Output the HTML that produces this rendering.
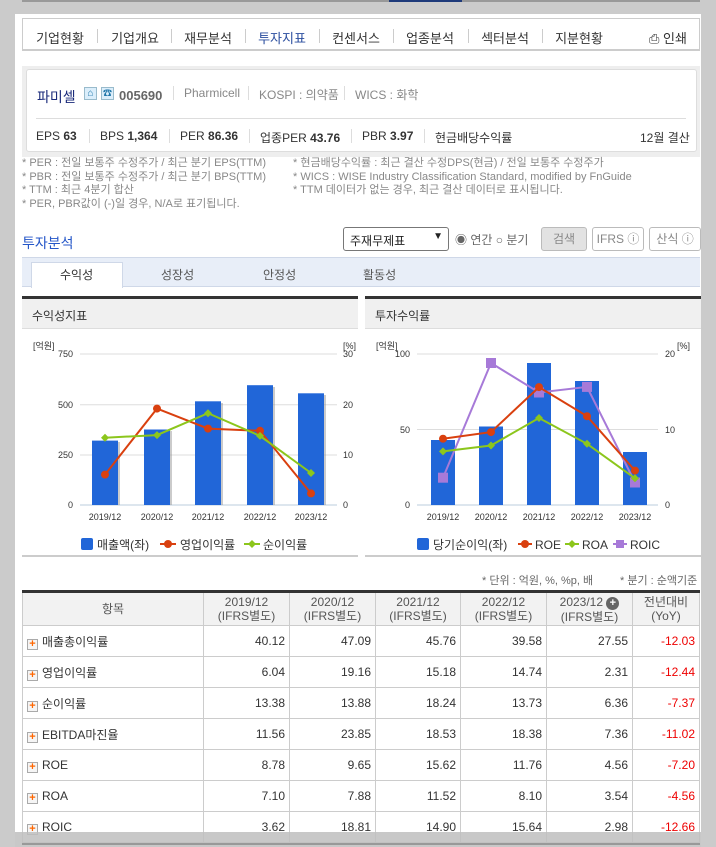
<!DOCTYPE html>
<html><head><meta charset="utf-8"><style>
*{margin:0;padding:0;box-sizing:border-box}
body{width:716px;height:847px;background:#cbcbcb;position:relative;overflow:hidden;font-family:"Liberation Sans","Noto Sans CJK KR",sans-serif;font-size:12px;color:#333}
.a{position:absolute;white-space:nowrap}
.white{position:absolute;left:15px;top:14px;width:686px;height:833px;background:#fff}
.nav{position:absolute;left:22px;top:18px;width:678px;height:33px;border:1px solid #ccc;border-bottom:2px solid #ccc;background:#fff}
.nav span{position:absolute;top:9px;font-size:13px;color:#333;width:74px;text-align:center}
.sep{position:absolute;top:10px;width:1px;height:14px;background:#ccc}
.note{font-size:11px;color:#888}
table{border-collapse:collapse;position:absolute;left:22px;top:590px;width:678px;border-top:3px solid #333}
td,th{border:1px solid #ccc;height:31px;font-size:12px;font-weight:normal}
th{background:#f2f2f2;color:#555;height:34px;line-height:14px}
td.n{text-align:right;padding-right:4px;color:#333}
td.r{color:#e00}
td.l{text-align:left;padding-left:4px}
.pl{display:inline-block;width:11px;height:11px;border:1px solid #aaa;background:#f5f5f5;color:#f60;font-size:11px;line-height:9px;text-align:center;font-weight:bold;margin-right:4px;vertical-align:-1px}
.btn{position:absolute;top:227px;height:24px;border:1px solid #bbb;border-radius:3px;font-size:12px;color:#888;text-align:center;line-height:22px}
</style></head><body>
<div class="a" style="left:22px;top:0;width:678px;height:2px;background:#999"></div>
<div class="a" style="left:389px;top:0;width:73px;height:2px;background:#1e3a7a"></div>
<div class="white"></div>
<div class="nav">
<span style="left:0">기업현황</span><div class="sep" style="left:74px"></div>
<span style="left:75px">기업개요</span><div class="sep" style="left:148px"></div>
<span style="left:148px">재무분석</span><div class="sep" style="left:222px"></div>
<span style="left:222px;color:#2a4d9e">투자지표</span><div class="sep" style="left:296px"></div>
<span style="left:296px">컨센서스</span><div class="sep" style="left:370px"></div>
<span style="left:370px">업종분석</span><div class="sep" style="left:445px"></div>
<span style="left:445px">섹터분석</span><div class="sep" style="left:519px"></div>
<span style="left:519px">지분현황</span>
<span style="left:620px;width:50px">⎙ 인쇄</span>
</div>
<div class="a" style="left:22px;top:66px;width:678px;height:91px;background:#eee"></div>
<div class="a" style="left:26px;top:69px;width:671px;height:83px;background:#fff;border:1px solid #ddd;border-radius:3px"></div>
<div class="a" style="left:37px;top:87px;font-size:14px;color:#1a2a7a">파미셀</div>
<div class="a" style="left:84px;top:87px;width:13px;height:13px;border:1px solid #9bc;background:#dbeefb;color:#27a;font-size:10px;line-height:11px;text-align:center">⌂</div>
<div class="a" style="left:101px;top:87px;width:13px;height:13px;border:1px solid #9bc;background:#dbeefb;color:#27a;font-size:9px;line-height:11px;text-align:center">☎</div>
<div class="a" style="left:119px;top:88px;font-size:13px;font-weight:bold;color:#666">005690</div>
<div class="a" style="left:173px;top:86px;width:1px;height:14px;background:#ddd"></div>
<div class="a note" style="left:184px;top:86px;font-size:12px">Pharmicell</div>
<div class="a" style="left:248px;top:86px;width:1px;height:14px;background:#ddd"></div>
<div class="a note" style="left:259px;top:86px;font-size:12px">KOSPI : 의약품</div>
<div class="a" style="left:344px;top:86px;width:1px;height:14px;background:#ddd"></div>
<div class="a note" style="left:355px;top:86px;font-size:12px">WICS : 화학</div>
<div class="a" style="left:36px;top:118px;width:650px;height:1px;background:#ddd"></div>
<div class="a" style="left:36px;top:129px;font-size:12px">EPS <b>63</b></div>
<div class="a" style="left:89px;top:129px;width:1px;height:14px;background:#ddd"></div>
<div class="a" style="left:100px;top:129px">BPS <b>1,364</b></div>
<div class="a" style="left:169px;top:129px;width:1px;height:14px;background:#ddd"></div>
<div class="a" style="left:180px;top:129px">PER <b>86.36</b></div>
<div class="a" style="left:249px;top:129px;width:1px;height:14px;background:#ddd"></div>
<div class="a" style="left:260px;top:129px">업종PER <b>43.76</b></div>
<div class="a" style="left:351px;top:129px;width:1px;height:14px;background:#ddd"></div>
<div class="a" style="left:362px;top:129px">PBR <b>3.97</b></div>
<div class="a" style="left:424px;top:129px;width:1px;height:14px;background:#ddd"></div>
<div class="a" style="left:435px;top:129px">현금배당수익률</div>
<div class="a" style="left:640px;top:129px">12월 결산</div>
<div class="a note" style="left:22px;top:157px;line-height:13.5px">* PER : 전일 보통주 수정주가 / 최근 분기 EPS(TTM)<br>* PBR : 전일 보통주 수정주가 / 최근 분기 BPS(TTM)<br>* TTM : 최근 4분기 합산<br>* PER, PBR값이 (-)일 경우, N/A로 표기됩니다.</div>
<div class="a note" style="left:293px;top:157px;line-height:13.5px">* 현금배당수익률 : 최근 결산 수정DPS(현금) / 전일 보통주 수정주가<br>* WICS : WISE Industry Classification Standard, modified by FnGuide<br>* TTM 데이터가 없는 경우, 최근 결산 데이터로 표시됩니다.</div>
<div class="a" style="left:22px;top:233px;font-size:14px;color:#2456c8">투자분석</div>
<div class="a" style="left:343px;top:227px;width:106px;height:24px;border:1px solid #777;border-radius:3px;background:#fff;font-size:12px;padding:4px 6px;color:#222">주재무제표<span style="position:absolute;right:5px;top:3px;font-size:10px">▼</span></div>
<div class="a" style="left:455px;top:231px;font-size:12px;color:#666">◉ 연간 ○ 분기</div>
<div class="btn" style="left:541px;width:46px;background:#e2e2e2">검색</div>
<div class="btn" style="left:592px;width:52px">IFRS ⓘ</div>
<div class="btn" style="left:649px;width:52px">산식 ⓘ</div>
<div class="a" style="left:22px;top:257px;width:678px;height:30px;background:#e8eef8;border-top:1px solid #cfd8e8;border-bottom:1px solid #cfd8e8"></div>
<div class="a" style="left:31px;top:262px;width:92px;height:26px;background:#fff;border:1px solid #cfd8e8;border-bottom:none"></div>
<div class="a" style="left:60px;top:266px;color:#333">수익성</div>
<div class="a" style="left:161px;top:266px;color:#555">성장성</div>
<div class="a" style="left:263px;top:266px;color:#555">안정성</div>
<div class="a" style="left:363px;top:266px;color:#555">활동성</div>
<div class="a" style="left:22px;top:296px;width:336px;height:33px;background:#f0f0f0;border-top:3px solid #333;border-bottom:1px solid #ddd"></div>
<div class="a" style="left:365px;top:296px;width:336px;height:33px;background:#f0f0f0;border-top:3px solid #333;border-bottom:1px solid #ddd"></div>
<div class="a" style="left:32px;top:307px">수익성지표</div>
<div class="a" style="left:375px;top:307px">투자수익률</div>
<svg class="a" style="left:0;top:0" width="716" height="570" font-family="Liberation Sans,Noto Sans CJK KR,sans-serif">
<g font-size="9" fill="#333">
<text x="33" y="349">[억원]</text><text x="343" y="349">[%]</text>
<text x="73" y="357" text-anchor="end">750</text><text x="73" y="408" text-anchor="end">500</text><text x="73" y="458" text-anchor="end">250</text><text x="73" y="508" text-anchor="end">0</text>
<text x="343" y="357">30</text><text x="343" y="408">20</text><text x="343" y="458">10</text><text x="343" y="508">0</text>
</g>
<g stroke="#ddd"><line x1="80" y1="354" x2="337" y2="354"/><line x1="80" y1="404.7" x2="337" y2="404.7"/><line x1="80" y1="455" x2="337" y2="455"/></g>
<line x1="80" y1="505" x2="337" y2="505" stroke="#bcd"/>
<g fill="#999" opacity=".5"><rect x="94" y="442" width="26" height="63"/><rect x="146" y="431" width="26" height="74"/><rect x="197" y="403" width="26" height="102"/><rect x="249" y="387" width="26" height="118"/><rect x="300" y="395" width="26" height="110"/></g>
<g fill="#2166d8"><rect x="92" y="440.6" width="26" height="64.4"/><rect x="144" y="429.5" width="26" height="75.5"/><rect x="195" y="401.3" width="26" height="103.7"/><rect x="247" y="385.2" width="26" height="119.8"/><rect x="298" y="393.3" width="26" height="111.7"/></g>
<polyline points="105,474.6 157,408.6 208,428.6 260,430.8 311,493.4" fill="none" stroke="#d9400f" stroke-width="2"/>
<g fill="#d9400f"><circle cx="105" cy="474.6" r="4"/><circle cx="157" cy="408.6" r="4"/><circle cx="208" cy="428.6" r="4"/><circle cx="260" cy="430.8" r="4"/><circle cx="311" cy="493.4" r="4"/></g>
<polyline points="105,437.7 157,435.1 208,413.2 260,435.9 311,473" fill="none" stroke="#8cc61c" stroke-width="2"/>
<g fill="#8cc61c"><path d="M105 433.7l4 4-4 4-4-4z"/><path d="M157 431.1l4 4-4 4-4-4z"/><path d="M208 409.2l4 4-4 4-4-4z"/><path d="M260 431.9l4 4-4 4-4-4z"/><path d="M311 469l4 4-4 4-4-4z"/></g>
<g font-size="9" fill="#333" text-anchor="middle"><text x="105" y="520">2019/12</text><text x="157" y="520">2020/12</text><text x="208" y="520">2021/12</text><text x="260" y="520">2022/12</text><text x="311" y="520">2023/12</text></g>
<rect x="81" y="538" width="12" height="12" rx="2" fill="#2166d8"/>
<text x="97" y="549" font-size="12" fill="#333">매출액(좌)</text>
<line x1="160" y1="544" x2="176" y2="544" stroke="#d9400f" stroke-width="2"/><circle cx="168" cy="544" r="4" fill="#d9400f"/>
<text x="180" y="549" font-size="12" fill="#333">영업이익률</text>
<line x1="244" y1="544" x2="260" y2="544" stroke="#8cc61c" stroke-width="2"/><path d="M252 540l4 4-4 4-4-4z" fill="#8cc61c"/>
<text x="263" y="549" font-size="12" fill="#333">순이익률</text>
<rect x="22" y="555" width="336" height="2" fill="#ccc"/>

<g font-size="9" fill="#333">
<text x="376" y="349">[억원]</text><text x="677" y="349">[%]</text>
<text x="410" y="357" text-anchor="end">100</text><text x="410" y="433" text-anchor="end">50</text><text x="410" y="508" text-anchor="end">0</text>
<text x="665" y="357">20</text><text x="665" y="433">10</text><text x="665" y="508">0</text>
</g>
<g stroke="#ddd"><line x1="417" y1="354" x2="658" y2="354"/><line x1="417" y1="429.5" x2="658" y2="429.5"/></g>
<line x1="417" y1="505" x2="658" y2="505" stroke="#bcd"/>
<g fill="#2166d8"><rect x="431" y="440" width="24" height="65"/><rect x="479" y="426.5" width="24" height="78.5"/><rect x="527" y="363" width="24" height="142"/><rect x="575" y="381" width="24" height="124"/><rect x="623" y="452" width="24" height="53"/></g>
<polyline points="443,477.7 491,363 539,392.5 587,386.9 635,482.5" fill="none" stroke="#a77ad8" stroke-width="2"/>
<g fill="#a77ad8"><rect x="438" y="472.7" width="10" height="10"/><rect x="486" y="358" width="10" height="10"/><rect x="534" y="387.5" width="10" height="10"/><rect x="582" y="381.9" width="10" height="10"/><rect x="630" y="477.5" width="10" height="10"/></g>
<polyline points="443,438.7 491,432.1 539,387.1 587,416.2 635,470.6" fill="none" stroke="#d9400f" stroke-width="2"/>
<g fill="#d9400f"><circle cx="443" cy="438.7" r="4"/><circle cx="491" cy="432.1" r="4"/><circle cx="539" cy="387.1" r="4"/><circle cx="587" cy="416.2" r="4"/><circle cx="635" cy="470.6" r="4"/></g>
<polyline points="443,451.4 491,445.5 539,418 587,443.8 635,478.3" fill="none" stroke="#8cc61c" stroke-width="2"/>
<g fill="#8cc61c"><path d="M443 447.4l4 4-4 4-4-4z"/><path d="M491 441.5l4 4-4 4-4-4z"/><path d="M539 414l4 4-4 4-4-4z"/><path d="M587 439.8l4 4-4 4-4-4z"/><path d="M635 474.3l4 4-4 4-4-4z"/></g>
<g font-size="9" fill="#333" text-anchor="middle"><text x="443" y="520">2019/12</text><text x="491" y="520">2020/12</text><text x="539" y="520">2021/12</text><text x="587" y="520">2022/12</text><text x="635" y="520">2023/12</text></g>
<rect x="417" y="538" width="12" height="12" rx="2" fill="#2166d8"/>
<text x="433" y="549" font-size="12" fill="#333">당기순이익(좌)</text>
<line x1="518" y1="544" x2="532" y2="544" stroke="#d9400f" stroke-width="2"/><circle cx="525" cy="544" r="4" fill="#d9400f"/>
<text x="535" y="549" font-size="12" fill="#333">ROE</text>
<line x1="565" y1="544" x2="579" y2="544" stroke="#8cc61c" stroke-width="2"/><path d="M572 540l4 4-4 4-4-4z" fill="#8cc61c"/>
<text x="582" y="549" font-size="12" fill="#333">ROA</text>
<line x1="613" y1="544" x2="627" y2="544" stroke="#a77ad8" stroke-width="2"/><rect x="616" y="540" width="8" height="8" fill="#a77ad8"/>
<text x="630" y="549" font-size="12" fill="#333">ROIC</text>
<rect x="365" y="555" width="336" height="2" fill="#ccc"/>
</svg>
<div class="a note" style="left:482px;top:572px;color:#666">* 단위 : 억원, %, %p, 배</div>
<div class="a note" style="left:620px;top:572px;color:#666">* 분기 : 순액기준</div>
<table>
<tr><th style="width:181px">항목</th><th style="width:86px">2019/12<br>(IFRS별도)</th><th style="width:86px">2020/12<br>(IFRS별도)</th><th style="width:85px">2021/12<br>(IFRS별도)</th><th style="width:86px">2022/12<br>(IFRS별도)</th><th style="width:86px">2023/12 <span style="display:inline-block;width:13px;height:13px;border-radius:50%;background:#666;color:#fff;font-size:11px;line-height:13px;text-align:center;font-weight:bold">+</span><br>(IFRS별도)</th><th>전년대비<br>(YoY)</th></tr>
<tr><td class="l"><span class="pl">+</span>매출총이익률</td><td class="n">40.12</td><td class="n">47.09</td><td class="n">45.76</td><td class="n">39.58</td><td class="n">27.55</td><td class="n r">-12.03</td></tr>
<tr><td class="l"><span class="pl">+</span>영업이익률</td><td class="n">6.04</td><td class="n">19.16</td><td class="n">15.18</td><td class="n">14.74</td><td class="n">2.31</td><td class="n r">-12.44</td></tr>
<tr><td class="l"><span class="pl">+</span>순이익률</td><td class="n">13.38</td><td class="n">13.88</td><td class="n">18.24</td><td class="n">13.73</td><td class="n">6.36</td><td class="n r">-7.37</td></tr>
<tr><td class="l"><span class="pl">+</span>EBITDA마진율</td><td class="n">11.56</td><td class="n">23.85</td><td class="n">18.53</td><td class="n">18.38</td><td class="n">7.36</td><td class="n r">-11.02</td></tr>
<tr><td class="l"><span class="pl">+</span>ROE</td><td class="n">8.78</td><td class="n">9.65</td><td class="n">15.62</td><td class="n">11.76</td><td class="n">4.56</td><td class="n r">-7.20</td></tr>
<tr><td class="l"><span class="pl">+</span>ROA</td><td class="n">7.10</td><td class="n">7.88</td><td class="n">11.52</td><td class="n">8.10</td><td class="n">3.54</td><td class="n r">-4.56</td></tr>
<tr><td class="l"><span class="pl">+</span>ROIC</td><td class="n">3.62</td><td class="n">18.81</td><td class="n">14.90</td><td class="n">15.64</td><td class="n">2.98</td><td class="n r">-12.66</td></tr>
</table>
<div class="a" style="left:15px;top:832px;width:686px;height:15px;background:rgba(190,190,190,0.85)"></div>
<div class="a" style="left:22px;top:843px;width:678px;height:2px;background:#999"></div>
</body></html>
